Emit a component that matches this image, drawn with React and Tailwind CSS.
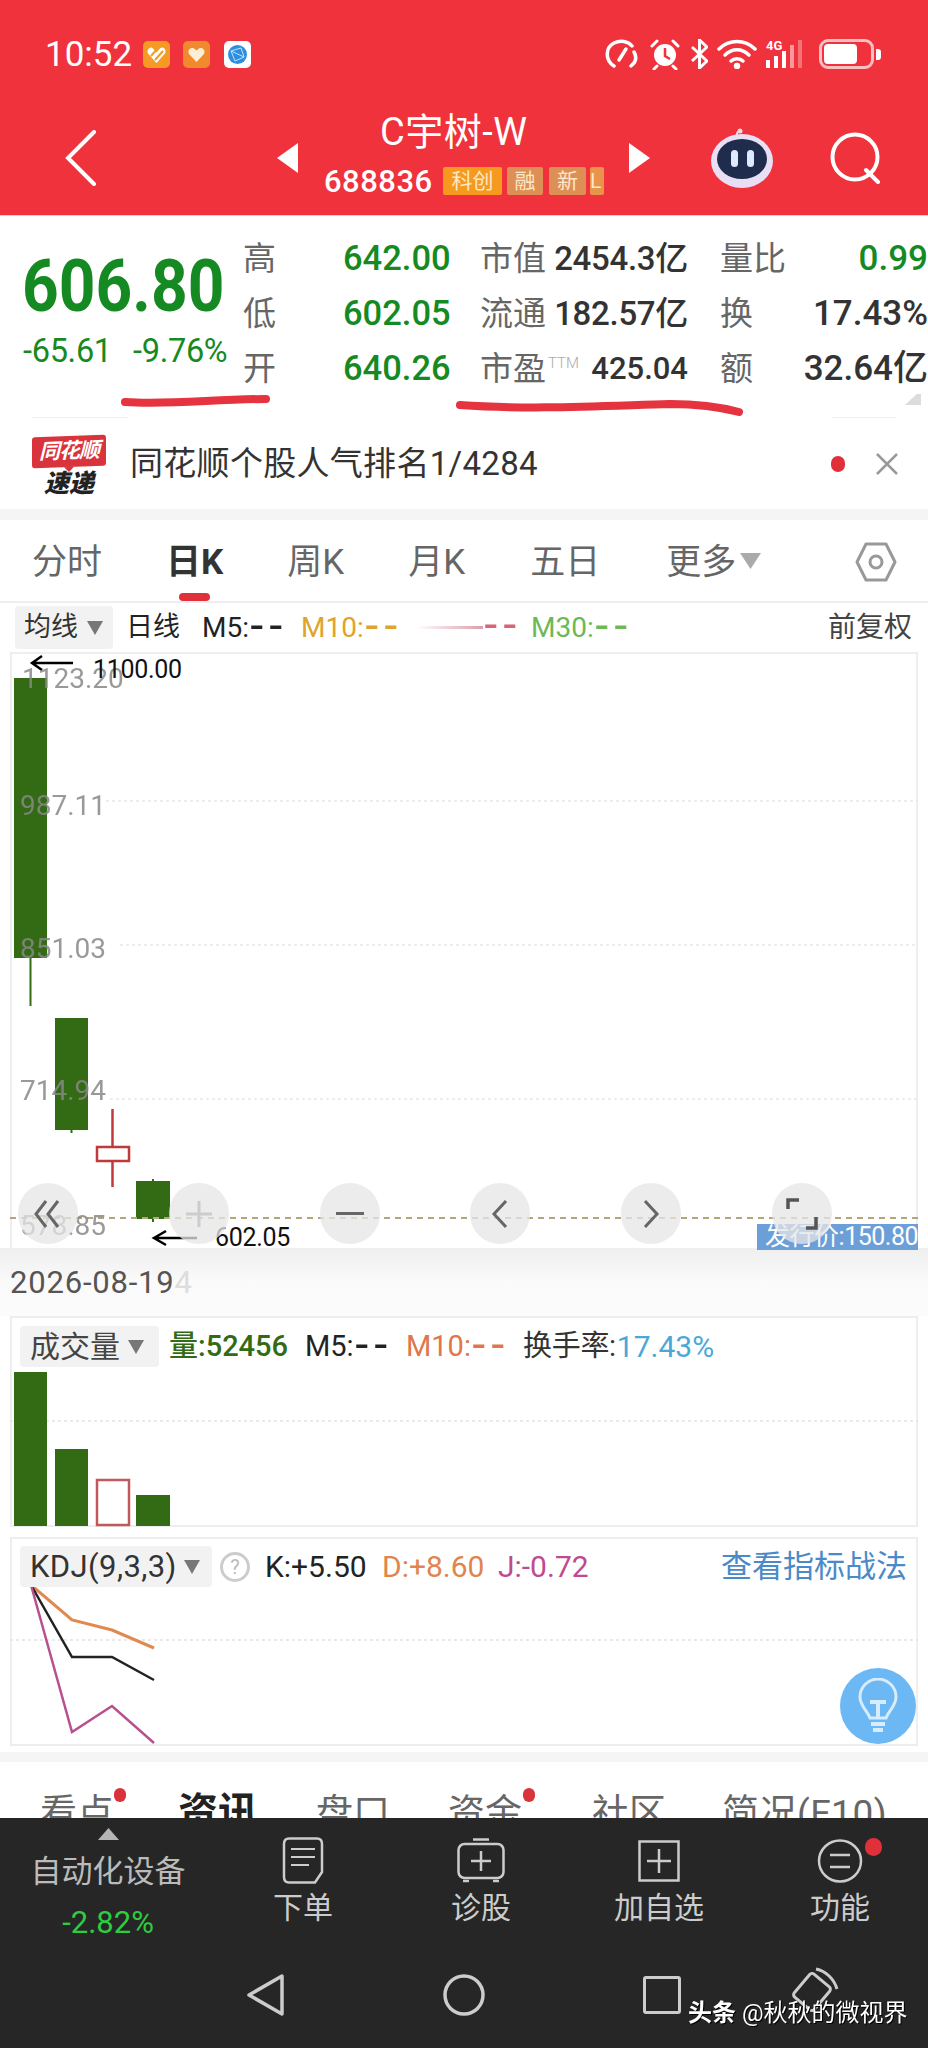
import React from "react";

const FONT = { fontFamily: '"Roboto","Noto Sans CJK SC",sans-serif' };
const GREEN = "text-[#168a22]";

function Tri({ className = "" }) {
  return (
    <svg width="16" height="14" viewBox="0 0 16 14" className={className}>
      <path d="M0 0H16L8 14Z" fill="#777" />
    </svg>
  );
}

function Dash() {
  return <span className="inline-block text-[32px] leading-[20px] font-bold tracking-[2.500px] scale-x-125 origin-left">--</span>;
}

function StatusBar() {
  return (
    <div className="flex items-center justify-between h-[36px] pl-[45px] pr-[47px]">
      <div className="flex items-center">
        <span className="text-[35px] leading-none text-white w-[98px]">10:52</span>
        <svg width="27" height="27" viewBox="0 0 27 27">
          <rect width="27" height="27" rx="5" fill="#f59a23" />
          <path d="M13.5 22 5 12.5c-2-4 3-8 5-5l3.5 4 3.5-4c3-3 7 1 5 5Z" fill="#fff" />
          <path d="M8 15 15 7M12 19l8-9" stroke="#f59a23" strokeWidth="2" />
        </svg>
        <svg width="27" height="27" viewBox="0 0 27 27" className="ml-[13px]">
          <rect width="27" height="27" rx="5" fill="#f08a2c" />
          <path d="M13.5 21 6 13c-2-4 2-7 5-5.500l2.500 2 2.500-2c3-1.500 7 1.500 5 5.500Z" fill="#fdeed8" />
        </svg>
        <svg width="27" height="27" viewBox="0 0 27 27" className="ml-[14px]">
          <rect width="27" height="27" rx="5" fill="#fff" />
          <circle cx="13.500" cy="13.500" r="9.500" fill="#2d8fe0" />
          <path d="M7 10 17 7l3 9-9 4ZM7 10l13 6" stroke="#bfe3ff" strokeWidth="1" fill="none" />
        </svg>
      </div>
      <div className="flex items-center text-white">
        <svg width="35" height="30" viewBox="0 0 35 30" fill="none" stroke="#fff" strokeWidth="3.500" strokeLinecap="round">
          <path d="M10 27C1 21 1 9 10 4c6-3 14-2 18 3" />
          <path d="M30 13c3 5 2 10-3 14" />
          <path d="M15 21l7-11" />
        </svg>
        <svg width="32" height="32" viewBox="0 0 32 32" className="ml-[10px]">
          <circle cx="16" cy="17" r="11" fill="#fff" />
          <path d="M3 8l5-5M29 8l-5-5M8 28l-3 3M24 28l3 3" stroke="#fff" strokeWidth="3" strokeLinecap="round" />
          <path d="M16 10v8l5 3" stroke="#f0323c" strokeWidth="2.500" fill="none" />
        </svg>
        <svg width="17" height="30" viewBox="0 0 17 30" fill="none" stroke="#fff" strokeWidth="3" className="ml-[10px]">
          <path d="M1 8l15 14-7.500 7V1L16 8 1 22" />
        </svg>
        <svg width="40" height="30" viewBox="0 0 40 30" fill="none" stroke="#fff" strokeWidth="3.500" strokeLinecap="round" className="ml-[9px]">
          <path d="M2 10c10-10 26-10 36 0" />
          <path d="M8 16c7-7 17-7 24 0" />
          <path d="M14 22c3-3 9-3 12 0" />
          <circle cx="20" cy="27" r="1.500" fill="#fff" />
        </svg>
        <div className="relative w-[43px] h-[30px] ml-[9px]">
          <svg width="43" height="30" viewBox="0 0 43 30" className="absolute left-0 top-0">
            <rect x="0" y="21" width="4" height="8" fill="#fff" />
            <rect x="8" y="17" width="4" height="12" fill="#fff" />
            <rect x="16" y="12" width="4" height="17" fill="#fff" />
            <rect x="24" y="6" width="4" height="23" fill="#ffffff80" />
            <rect x="32" y="1" width="4" height="28" fill="#ffffff50" />
          </svg>
          <span className="absolute left-0 top-0 text-[13px] leading-none font-bold">4G</span>
        </div>
        <div className="flex items-center ml-[10px]">
          <div className="w-[55px] h-[30px] rounded-[9px] border-[3px] border-[#ffffffb0] p-[2px]">
            <div className="w-[33px] h-full rounded-[4px] bg-white" />
          </div>
          <div className="w-[5px] h-[11px] rounded-r-[3px] bg-white ml-[2px]" />
        </div>
      </div>
    </div>
  );
}

function NavBar() {
  return (
    <div className="flex items-center h-[100px] mt-[36px] relative">
      <svg width="32" height="56" viewBox="0 0 32 56" fill="none" stroke="#fff" strokeWidth="4" strokeLinecap="round" className="ml-[65px]">
        <path d="M29 2 3 28 29 54" />
      </svg>
      <svg width="21" height="30" viewBox="0 0 21 30" className="ml-[180px]">
        <path d="M21 0V30L0 15Z" fill="#fff" />
      </svg>
      <div className="w-[331px] h-full relative text-white">
        <div className="absolute left-[82px] top-[1px] text-[38px] leading-[46px] whitespace-nowrap tracking-[0.5px]">C宇树-W</div>
        <div className="absolute left-[26px] top-[58px] w-[280px] overflow-hidden flex items-center h-[30px]">
          <span className="text-[31px] leading-none tracking-[0.5px] font-medium w-[119px] shrink-0">688836</span>
          <span className="w-[59px] shrink-0 h-[28px] bg-[#f59a1e] rounded-[2px] text-[21px] leading-[28px] text-center text-[#fde8c8]">科创</span>
          <span className="w-[36px] shrink-0 h-[28px] ml-[5px] bg-[#dd8f56] rounded-[2px] text-[21px] leading-[28px] text-center text-[#fde8c8]">融</span>
          <span className="w-[37px] shrink-0 h-[28px] ml-[6px] bg-[#dd8f56] rounded-[2px] text-[21px] leading-[28px] text-center text-[#fde8c8]">新</span>
          <span className="w-[14px] shrink-0 h-[28px] ml-[4px] bg-[#e8944a] rounded-[2px] text-[21px] leading-[28px] overflow-hidden text-[#fde8c8]">L</span>
        </div>
      </div>
      <svg width="21" height="30" viewBox="0 0 21 30">
        <path d="M0 0V30L21 15Z" fill="#fff" />
      </svg>
      <svg width="64" height="60" viewBox="0 0 64 60" className="ml-[60px]">
        <path d="M28 12C26 8 26 5 29 3" stroke="#f8d8e0" strokeWidth="2" fill="none" />
        <circle cx="30" cy="3" r="2.500" fill="#f8d8e0" />
        <ellipse cx="32" cy="33" rx="31" ry="27" fill="#e8dff5" />
        <ellipse cx="32" cy="31" rx="25" ry="20" fill="#1f2c4c" />
        <rect x="21" y="22" width="7" height="17" rx="3.500" fill="#dfe9ff" />
        <rect x="37" y="22" width="7" height="17" rx="3.500" fill="#dfe9ff" />
      </svg>
      <svg width="52" height="52" viewBox="0 0 52 52" fill="none" stroke="#fff" strokeWidth="4" className="ml-[56px]">
        <circle cx="25" cy="25" r="22.500" />
        <path d="M36 38l12 12" strokeLinecap="round" />
      </svg>
    </div>
  );
}

function QuoteRow({ label, value, l2, v2, l3, v3, l2extra, small }) {
  return (
    <div className="flex items-center h-[55px]">
      <span className="w-[100px] text-[33px] leading-none text-[#666] shrink-0">{label}</span>
      <span className={`w-[106px] text-[34.500px] leading-none font-medium text-right shrink-0 ${GREEN}`}>{value}</span>
      <span className="ml-[31px] w-[68px] text-[33px] leading-none text-[#666] whitespace-nowrap shrink-0">{l2}</span>
      <span className="w-[140px] shrink-0 relative text-[#333] font-medium text-right whitespace-nowrap leading-none">
        <span className="absolute left-0 top-[3px] text-[15px] text-[#aaa] font-light">{l2extra}</span>
        <span className={small ? "text-[31px]" : "text-[33px] tracking-[-0.3px]"}>{v2}</span>
      </span>
      <span className="ml-[32px] w-[72px] text-[33px] leading-none text-[#666] shrink-0">{l3}</span>
      <span className="w-[136px] shrink-0 text-[35px] leading-none text-right font-medium whitespace-nowrap">{v3}</span>
    </div>
  );
}

function Quote() {
  return (
    <div className="relative h-[202px] pt-[15px] flex">
      <div className="w-[243px] shrink-0">
        <div className={`text-[72px] leading-none font-bold origin-left scale-x-[0.89] whitespace-nowrap mt-[20px] ml-[22px] ${GREEN}`}>606.80</div>
        <div className={`flex text-[32.500px] leading-none mt-[12px] pl-[23px] ${GREEN}`}>
          <span className="w-[110px] tracking-[-0.3px]">-65.61</span>
          <span className="tracking-[-0.3px]">-9.76%</span>
        </div>
      </div>
      <div className="w-[685px] overflow-hidden">
        <QuoteRow label="高" value="642.00" l2="市值" v2="2454.3亿" l3="量比" v3={<span className={GREEN}>0.99</span>} />
        <QuoteRow label="低" value="602.05" l2="流通" v2="182.57亿" l3="换" v3={<span className="text-[#333]">17.43%</span>} />
        <QuoteRow label="开" value="640.26" l2="市盈" l2extra="TTM" small v2="425.04" l3="额" v3={<span className="text-[#333]">32.64亿</span>} />
      </div>
      <svg width="928" height="40" viewBox="0 0 928 40" className="absolute left-0 top-[178px]" fill="none">
        <path d="M125 8C170 11 215 5 266 5" stroke="#e5343f" strokeWidth="8" strokeLinecap="round" />
        <path d="M460 11C530 16 600 12 670 10 700 10 720 13 739 18" stroke="#e5343f" strokeWidth="8" strokeLinecap="round" />
        <path d="M921 -4V11H905Z" fill="#dcdcdc" stroke="none" />
      </svg>
      <div className="absolute left-[32px] bottom-0 w-[96px] h-px bg-[#efefef]" />
      <div className="absolute left-[832px] bottom-0 w-[64px] h-px bg-[#efefef]" />
    </div>
  );
}

function Banner() {
  return (
    <div className="flex items-center h-[91px] relative">
      <div className="ml-[32px] w-[74px] h-[62px] flex flex-col items-center mt-[6px]">
        <div className="relative w-[74px] h-[32px] bg-[#d9333b] rounded-[3px] -skew-y-2 flex items-center justify-center">
          <span className="text-[21px] leading-none italic font-bold text-white whitespace-nowrap tracking-[-1px]">同花顺</span>
          <span className="absolute left-[32px] bottom-[-5px] border-x-[5px] border-t-[5px] border-x-transparent border-t-[#d9333b]" />
        </div>
        <span className="text-[25px] leading-[28px] mt-[3px] italic font-black text-[#222] whitespace-nowrap">速递</span>
      </div>
      <span className="ml-[24px] text-[33px] leading-none text-[#333] whitespace-nowrap tracking-[0.3px]">同花顺个股人气排名1/4284</span>
      <div className="ml-auto w-[14px] h-[16px] rounded-full bg-[#e0303a]" />
      <svg width="22" height="22" viewBox="0 0 22 22" className="ml-[31px] mr-[30px]" stroke="#999" strokeWidth="2.500">
        <path d="M1 1 21 21M21 1 1 21" />
      </svg>
    </div>
  );
}

function KTabs() {
  return (
    <div className="relative flex items-center h-[83px] border-b-2 border-[#eee] text-[#666] text-[35px] leading-none pl-[32px] pt-[3px]">
      <span>分时</span>
      <span className="ml-[64px] font-bold text-[#333]">日K</span>
      <span className="ml-[64px]">周K</span>
      <span className="ml-[64px]">月K</span>
      <span className="ml-[65px]">五日</span>
      <span className="ml-[66px]">更多</span>
      <svg width="21" height="16" viewBox="0 0 21 16" className="ml-[4px] mb-[2px]"><path d="M0 0H21L10.500 16Z" fill="#aaa" /></svg>
      <svg width="42" height="40" viewBox="0 0 42 40" fill="none" stroke="#999" strokeWidth="3" className="ml-auto mr-[31px]">
        <path d="M11 2H31L40 20 31 38H11L2 20Z" strokeLinejoin="round" />
        <circle cx="21" cy="20" r="6" />
      </svg>
      <div className="absolute left-[179px] bottom-0 w-[31px] h-[8px] rounded-full bg-[#e0303a]" />
    </div>
  );
}

function MaRow() {
  return (
    <div className="flex items-center h-[49px] text-[27px] leading-none whitespace-nowrap">
      <div className="ml-[15px] w-[98px] h-[43px] bg-[#f2f2f2] rounded-[4px] flex items-center pl-[9px] text-[#333]">
        <span>均线</span>
        <Tri className="ml-[9px]" />
      </div>
      <span className="ml-[13px] text-[#222]">日线</span>
      <span className="ml-[22px] w-[77px] text-[28px] text-[#222]">M5:<Dash /></span>
      <span className="ml-[22px] w-[93px] text-[28px] text-[#dfa42d]">M10:<Dash /></span>
      <span className="ml-[22px] w-[93px] h-[26px] flex items-center justify-end">
        <span className="h-[3px] w-[68px] bg-linear-to-r from-white to-[#d9a0ae]" />
        <span className="w-[26px] text-[#d9647a]"><Dash /></span>
      </span>
      <span className="ml-[22px] text-[28px] text-[#6cb955]">M30:<Dash /></span>
      <span className="ml-auto mr-[16px] text-[28px] text-[#444]">前复权</span>
    </div>
  );
}

function RoundBtn({ cls, children }) {
  return (
    <div className={`absolute top-[529px] w-[60px] h-[61px] rounded-full bg-[#e6e6e6c0] flex items-center justify-center ${cls}`}>
      {children}
    </div>
  );
}

function MainChart() {
  const axis = "absolute text-[28px] leading-none text-[#888] opacity-85";
  return (
    <div className="relative ml-[10px] w-[908px] h-[596px] border-x-2 border-t-2 border-[#eee] box-border">
      <svg width="908" height="596" viewBox="10 652 908 596" className="absolute left-[-2px] top-[-2px]">
        <path d="M106 801H918M120 945H918M110 1099H918" stroke="#e8e8e8" strokeWidth="1.500" strokeDasharray="3 3" />
        <rect x="14" y="678" width="33" height="280" fill="#336a14" />
        <path d="M30.500 958V1006" stroke="#336a14" strokeWidth="2" />
        <rect x="55" y="1018" width="33" height="112" fill="#336a14" />
        <path d="M71.500 1130V1133" stroke="#336a14" strokeWidth="2" />
        <path d="M112.500 1109V1187" stroke="#c0393b" strokeWidth="2.500" />
        <rect x="97" y="1147" width="32" height="14" fill="#fff" stroke="#c0393b" strokeWidth="2.500" />
        <rect x="136" y="1181" width="34" height="38" fill="#336a14" />
        <path d="M153 1179V1222" stroke="#336a14" strokeWidth="2" />
        <path d="M10 1218H918" stroke="#b3a678" strokeWidth="2" strokeDasharray="6 5" />
        <path d="M73 663H33M42 656 32 663 42 670" stroke="#000" strokeWidth="2.500" fill="none" />
        <path d="M197 1238H155M166 1231 154 1238 166 1245" stroke="#000" strokeWidth="2.500" fill="none" />
      </svg>
      <span className={`${axis} left-[10px] top-[11px]`}>1123.20</span>
      <span className={`${axis} left-[8px] top-[138px]`}>987.11</span>
      <span className={`${axis} left-[8px] top-[281px]`}>851.03</span>
      <span className={`${axis} left-[8px] top-[423px]`}>714.94</span>
      <span className={`${axis} left-[8px] top-[558px]`}>578.85</span>
      <span className="absolute left-[81px] top-[1px] text-[25px] leading-[30px] text-[#111] tracking-[-0.3px]">1100.00</span>
      <span className="absolute left-[203px] top-[569px] text-[25px] leading-[30px] text-[#111] tracking-[-0.3px]">602.05</span>
      <span className="absolute right-[-2px] top-[570px] w-[161px] h-[26px] bg-[#6c9fd8] text-white text-[25px] leading-[26px] text-right whitespace-nowrap tracking-[-0.5px]">发行价:150.80</span>
      <RoundBtn cls="left-[6px]">
        <svg width="30" height="30" viewBox="0 0 30 30" fill="none" stroke="#666" strokeWidth="3"><path d="M13 2 3 15l10 13M25 2 15 15l10 13" /></svg>
      </RoundBtn>
      <RoundBtn cls="left-[157px]">
        <svg width="30" height="30" viewBox="0 0 30 30" fill="none" stroke="#ccc" strokeWidth="3"><path d="M15 2V28M2 15H28" /></svg>
      </RoundBtn>
      <RoundBtn cls="left-[308px]">
        <div className="w-[28px] h-[3px] bg-[#666]" />
      </RoundBtn>
      <RoundBtn cls="left-[458px]">
        <svg width="18" height="30" viewBox="0 0 18 30" fill="none" stroke="#666" strokeWidth="3"><path d="M15 2 3 15l12 13" /></svg>
      </RoundBtn>
      <RoundBtn cls="left-[609px]">
        <svg width="18" height="30" viewBox="0 0 18 30" fill="none" stroke="#666" strokeWidth="3"><path d="M3 2 15 15 3 28" /></svg>
      </RoundBtn>
      <RoundBtn cls="left-[760px]">
        <svg width="34" height="34" viewBox="0 0 34 34" fill="none" stroke="#555" strokeWidth="3.500"><path d="M3 12V3H14M31 20V31H21" /></svg>
      </RoundBtn>
    </div>
  );
}

function DateStrip() {
  return (
    <div className="h-[68px] pl-[10px] flex items-center bg-linear-to-b from-[#efefef] via-[#fafafa] to-[#fcfcfc] text-[31px] leading-none text-[#555] tracking-[0.8px]">
      <span>2026-08-19</span>
      <span className="text-[#ddd]">4</span>
    </div>
  );
}

function VolumePanel() {
  return (
    <div className="relative ml-[10px] w-[908px] h-[211px] border-2 border-[#eee] box-border text-[29px] leading-none">
      <svg width="908" height="211" viewBox="10 1316 908 211" className="absolute left-[-2px] top-[-2px]">
        <path d="M10 1421H918" stroke="#e4e4e4" strokeWidth="1.500" strokeDasharray="3 3" />
        <rect x="14" y="1372" width="33" height="154" fill="#336a14" />
        <rect x="55" y="1449" width="33" height="77" fill="#336a14" />
        <rect x="97" y="1480" width="32" height="45" fill="#fff" stroke="#c0595b" strokeWidth="2.500" />
        <rect x="136" y="1495" width="34" height="31" fill="#336a14" />
      </svg>
      <div className="relative flex items-center mt-[8px] h-[41px] whitespace-nowrap">
        <div className="ml-[8px] w-[139px] h-[41px] rounded-[4px] bg-[#f2f2f2] flex items-center pl-[10px] text-[#444] text-[30px]">
          <span>成交量</span>
          <Tri className="ml-[8px]" />
        </div>
        <span className="ml-[10px] w-[126px] text-[#336a14] font-medium">量:52456</span>
        <span className="ml-[10px] w-[91px] text-[#222]">M5:<Dash /></span>
        <span className="ml-[10px] w-[107px] text-[#e0764a]">M10:<Dash /></span>
        <span className="ml-[10px] text-[#333] tracking-[-0.3px]">换手率:</span>
        <span className="text-[#4aa8d8] ml-[1px] text-[30px]">17.43%</span>
      </div>
    </div>
  );
}

function KdjPanel() {
  return (
    <div className="relative ml-[10px] mt-[10px] w-[908px] h-[209px] border-2 border-[#eee] box-border text-[30px] leading-none">
      <svg width="908" height="209" viewBox="10 1537 908 209" className="absolute left-[-2px] top-[-2px]" fill="none" strokeWidth="2.500">
        <path d="M10 1640H918" stroke="#e4e4e4" strokeWidth="1.500" strokeDasharray="3 3" />
        <path d="M31 1585 72 1620 112 1630 154 1648" stroke="#e08a50" strokeWidth="3" />
        <path d="M31 1585 72 1657 112 1657 154 1680" stroke="#222" />
        <path d="M31 1585 72 1732 112 1706 154 1743" stroke="#b8508f" />
      </svg>
      <div className="relative flex items-center mt-[7px] h-[41px] whitespace-nowrap">
        <div className="ml-[8px] w-[192px] h-[41px] rounded-[4px] bg-[#f2f2f2] flex items-center pl-[10px] text-[#333] text-[31px]">
          <span className="w-[145px] shrink-0 tracking-[0.4px]">KDJ(9,3,3)</span>
          <Tri className="ml-[9px]" />
        </div>
        <span className="ml-[8px] w-[30px] h-[30px] rounded-full border-[3px] border-[#ccc] text-[#bbb] text-[20px] flex items-center justify-center">?</span>
        <span className="ml-[15px] w-[117px] text-[#222]">K:+5.50</span>
        <span className="w-[116px] text-[#e08550]">D:+8.60</span>
        <span className="text-[#c04a90]">J:-0.72</span>
        <span className="ml-auto mr-[9px] text-[#4a8ac8] text-[31px]">查看指标战法</span>
      </div>
      <div className="absolute left-[828px] top-[129px] w-[76px] h-[76px] rounded-full bg-[#6cb8f5] flex items-center justify-center">
        <svg width="40" height="56" viewBox="0 0 40 56" fill="none" stroke="#d7ecfc" strokeWidth="3">
          <path d="M12 40C9 32 2 28 2 19A18 18 0 0 1 38 19C38 28 31 32 28 40Z" />
          <path d="M12 24H28M20 24V40" strokeWidth="4" />
          <path d="M13 46H27M15 52H25" strokeWidth="4" />
        </svg>
      </div>
    </div>
  );
}

function InfoTabs() {
  return (
    <div className="relative mt-[6px]">
      <div className="h-[10px] bg-[#f5f5f5]" />
      <div className="relative h-[56px] overflow-hidden flex pt-[33px] text-[37px] leading-none text-[#666] whitespace-nowrap pl-[40px]">
        <span>看点</span>
        <span className="ml-[64px] mt-[-2px] text-[40px] font-bold text-[#222]">资讯</span>
        <span className="ml-[58px]">盘口</span>
        <span className="ml-[58px]">资金</span>
        <span className="ml-[70px]">社区</span>
        <span className="ml-[56px] tracking-[0.5px]">简况(F10)</span>
        <div className="absolute left-[114px] top-[26px] w-[12px] h-[14px] rounded-full bg-[#d9333b]" />
        <div className="absolute left-[523px] top-[26px] w-[12px] h-[14px] rounded-full bg-[#d9333b]" />
      </div>
    </div>
  );
}

function FootItem({ cls, icon, label, children }) {
  return (
    <div className={`relative flex flex-col items-center shrink-0 mt-[-1px] w-[120px] ${cls}`}>
      <div className="h-[47px] flex items-center justify-center mt-[10px]">{icon}</div>
      <span className="mt-[6px] text-[30px] leading-[36px] text-[#ccc] whitespace-nowrap">{label}</span>
      {children}
    </div>
  );
}

function Footer() {
  return (
    <div className="h-[230px] bg-[#262626]">
      <div className="flex h-[124px] pt-[10px]">
        <div className="w-[216px] shrink-0 flex flex-col items-center">
          <svg width="21" height="12" viewBox="0 0 21 12"><path d="M10.500 0 21 12H0Z" fill="#b5b5b5" /></svg>
          <span className="mt-[15px] text-[31px] leading-[34px] text-[#bbb] whitespace-nowrap">自动化设备</span>
          <span className="mt-[17px] text-[31px] leading-[34px] text-[#2ecc40] whitespace-nowrap">-2.82%</span>
        </div>
        <FootItem cls="ml-[27px]" label="下单" icon={
          <svg width="42" height="47" viewBox="0 0 42 47" fill="none" stroke="#ccc" strokeWidth="2.500">
            <path d="M7 1.500H35Q40 1.500 40 7V35L33 45.500H7Q2 45.500 2 40V7Q2 1.500 7 1.500Z" />
            <path d="M9 12H33M9 20H33M9 28H27" strokeWidth="2" />
          </svg>
        } />
        <FootItem cls="ml-[58px]" label="诊股" icon={
          <svg width="48" height="45" viewBox="0 0 48 45" fill="none" stroke="#ccc" strokeWidth="2.500">
            <rect x="1.500" y="6" width="45" height="34" rx="6" />
            <path d="M16 1.500H32M6 43H12M36 43H42M14 23H34M24 13V33" />
          </svg>
        } />
        <FootItem cls="ml-[58px]" label="加自选" icon={
          <svg width="42" height="42" viewBox="0 0 42 42" fill="none" stroke="#ccc" strokeWidth="2.500">
            <rect x="1.500" y="1.500" width="39" height="39" />
            <path d="M9 21H33M21 9V33" />
          </svg>
        } />
        <FootItem cls="ml-[61px]" label="功能" icon={
          <svg width="46" height="44" viewBox="0 0 46 44" fill="none" stroke="#ccc" strokeWidth="2.500">
            <ellipse cx="23" cy="22" rx="21" ry="20.500" />
            <path d="M13 16H33M13 28H33" />
          </svg>
        }>
          <div className="absolute left-[85px] top-[11px] w-[17px] h-[18px] rounded-full bg-[#e0303a]" />
        </FootItem>
      </div>
      <div className="relative flex items-center h-[106px]">
        <svg width="38" height="42" viewBox="0 0 38 42" fill="none" stroke="#ccc" strokeWidth="3.500" strokeLinejoin="round" className="ml-[247px]">
          <path d="M35 2V40L2 21Z" />
        </svg>
        <svg width="42" height="42" viewBox="0 0 42 42" fill="none" stroke="#ccc" strokeWidth="3.500" className="ml-[158px]">
          <ellipse cx="21" cy="21" rx="19" ry="19" />
        </svg>
        <div className="ml-[158px] w-[38px] h-[38px] border-[3.500px] border-[#ccc] rounded-[3px]" />
        <svg width="54" height="50" viewBox="0 0 54 50" fill="none" stroke="#ccc" strokeWidth="3" className="ml-[105px] mt-[-6px]">
          <rect x="13" y="10" width="26" height="30" rx="3" transform="rotate(40 26 25)" />
          <path d="M30 2C40 4 48 12 51 22" />
        </svg>
        <span className="absolute left-[688px] top-[56px] text-[24px] leading-[30px] text-white whitespace-nowrap drop-shadow-[1px_1px_0_#000]">
          <b className="font-bold">头条</b> @秋秋的微视界
        </span>
      </div>
    </div>
  );
}

export default function App() {
  return (
    <div className="w-[928px] h-[2048px] overflow-hidden bg-white" style={FONT}>
      <div className="h-[216px] bg-[#f0323c] pt-[36px] overflow-hidden border-b border-[#d9d9d9]">
        <StatusBar />
        <NavBar />
      </div>
      <Quote />
      <Banner />
      <div className="h-[11px] bg-[#f5f5f5]" />
      <KTabs />
      <MaRow />
      <MainChart />
      <DateStrip />
      <VolumePanel />
      <KdjPanel />
      <InfoTabs />
      <Footer />
    </div>
  );
}
